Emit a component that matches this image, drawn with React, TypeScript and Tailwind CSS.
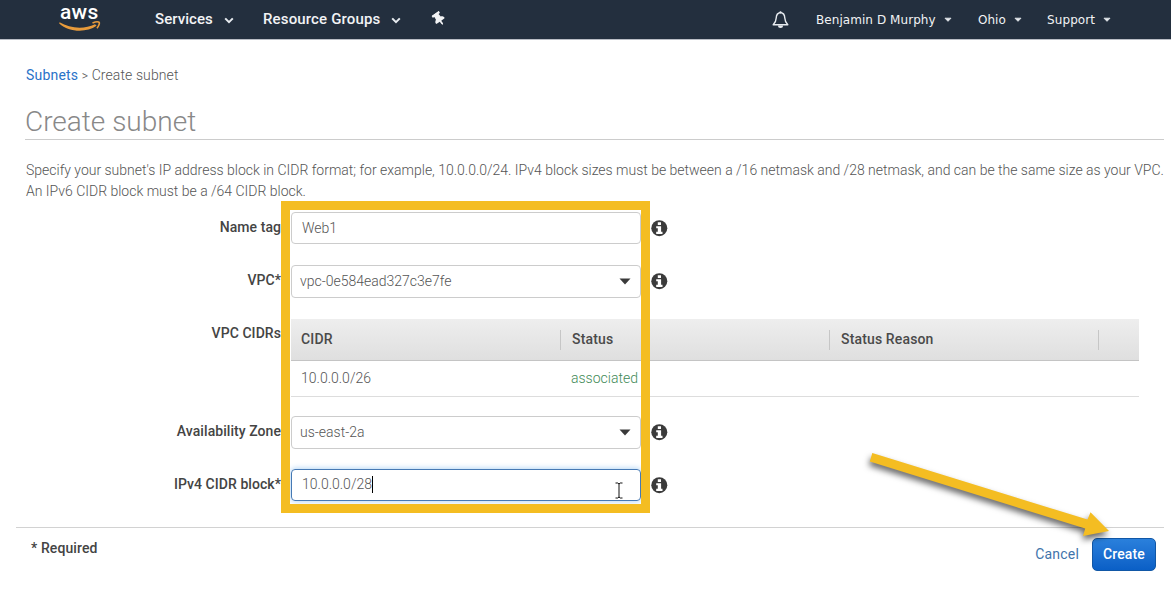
import type { ReactNode } from "react";
import { FaThumbtack } from "react-icons/fa";

function Chevron({ className, small }: { className?: string; small?: boolean }) {
  return (
    <svg className={className} width={small ? 8 : 10} height={small ? 6 : 7} viewBox="0 0 10 7" fill="none">
      {small ? (
        <path d="M1.2 1.2h7.6L5 5.2z" fill="#e8ecf0" stroke="#e8ecf0" strokeWidth="1" />
      ) : (
        <path d="M1.2 1.4 5 5.2l3.8-3.8" stroke="#e8ecf0" strokeWidth="2" />
      )}
    </svg>
  );
}

function Logo() {
  return (
    <div className="relative h-[39px] w-[42px] shrink-0">
      <span className="absolute top-0 left-[1px] text-[21px] leading-[25px] font-medium tracking-[0.3px] text-white">
        aws
      </span>
      <svg className="absolute top-[20px] left-0" width="42" height="12" viewBox="0 0 42 12" fill="none">
        <path
          d="M0.500 2.200C11 8.400 25 9.600 36 4.200l1.600 1.600C27 13 10 12.200 0.200 3.400z"
          fill="#e89b3b"
        />
        <path d="M33.500 3c3-1.300 6-1.400 6.700-.6.500.800-.3 3.800-2.300 5.800" stroke="#e89b3b" strokeWidth="1.600" />
      </svg>
    </div>
  );
}

function Bell() {
  return (
    <svg width="17" height="18" viewBox="0 0 17 18" fill="none">
      <path
        d="M8.500 1.500C5.600 1.900 4.300 4 4.200 7c-.1 3.200-1 4.800-3 6.700h14.600c-2-1.900-2.900-3.500-3-6.700-.1-3-1.400-5.100-4.300-5.500z"
        stroke="#e8ecf0"
        strokeWidth="1.400"
        strokeLinejoin="round"
      />
      <path d="M6 14.500a2.500 2.500 0 0 0 5 0z" fill="#e8ecf0" />
      <circle cx="8.500" cy="1.300" r="1.100" fill="#e8ecf0" />
    </svg>
  );
}

function Row({ label, children, className }: { label: string; children: ReactNode; className: string }) {
  return (
    <div className={`flex ${className}`}>
      <div className="w-[281px] shrink-0 text-right text-[14px] leading-[20px] font-medium tracking-[0.06px] whitespace-nowrap text-[#444]">
        {label}
      </div>
      <div className="ml-[10px] flex">{children}</div>
    </div>
  );
}

function Info() {
  return (
    <svg className="mt-[8px] ml-[10px] shrink-0" width="17" height="17" viewBox="0 0 17 17">
      <circle cx="8.300" cy="8.200" r="8" fill="#3b3b3b" />
      <path d="M6.800 2.300h3.200v2.800H6.800zM5.200 6.200h4.900v5.600h1.400v2.100H5.200v-2.100h1.600V8.200H5.200z" fill="#fff" />
    </svg>
  );
}

function Select({ value }: { value: string }) {
  return (
    <div className="flex h-[33px] w-[350px] items-center justify-between rounded-[4px] border border-[#ccc] bg-white pr-[9px] pl-[8px] text-[14px] font-light text-[#555]">
      {value}
      <svg width="12" height="7" viewBox="0 0 12 7">
        <path d="M0.500 0.500h11L6 6.500z" fill="#3a3a3a" />
      </svg>
    </div>
  );
}

function HeadCell({ children, className }: { children?: ReactNode; className: string }) {
  return (
    <div
      className={`flex h-[20px] items-center border-[#c6c6c6] text-[14px] font-medium tracking-[0.150px] text-[#4a4a4a] ${className}`}
    >
      {children}
    </div>
  );
}

export default function App() {
  return (
    <div className="relative h-[599px] w-[1171px] overflow-hidden bg-white font-[Roboto,sans-serif]">
      <header className="flex h-[40px] items-center border-b border-[#b9bdc5] bg-[#232f3e] pl-[59px] text-[#f2f3f5]">
        <Logo />
        <nav className="flex h-full items-center pb-[1px] text-[15px] font-medium">
          <span className="ml-[54px] w-[58px] tracking-[0.05px] whitespace-nowrap">Services</span>
          <Chevron className="mt-[2px] ml-[11px]" />
          <span className="ml-[29px] w-[118px] tracking-[0.150px] whitespace-nowrap">Resource Groups</span>
          <Chevron className="mt-[2px] ml-[10px]" />
          <FaThumbtack className="ml-[31px] -rotate-[35deg]" size={14} />
        </nav>
        <div className="ml-auto flex items-center pr-[60px] font-['DejaVu_Sans',sans-serif] text-[12px]">
          <Bell />
          <span className="ml-[27px] w-[120px] tracking-[0.060px] whitespace-nowrap">Benjamin D Murphy</span>
          <Chevron small className="ml-[8px]" />
          <span className="ml-[26px] w-[28px] whitespace-nowrap">Ohio</span>
          <Chevron small className="ml-[8px]" />
          <span className="ml-[25px] w-[49px] tracking-[0.1px] whitespace-nowrap">Support</span>
          <Chevron small className="ml-[7px]" />
        </div>
      </header>

      <div className="pt-[25px] pl-[26px] text-[14px] leading-[20px] font-light tracking-[0.1px] text-[#555]">
        <a className="font-normal tracking-[0.2px] text-[#2a72c8]">Subnets</a> <span className="text-[12px]">&gt;</span>{" "}
        Create subnet
      </div>
      <h1 className="ml-[25px] w-[1139px] border-b border-[#ccc] pt-[18px] text-[28px] leading-[35px] font-light text-[#888]">
        Create subnet
      </h1>
      <p className="pt-[20px] pl-[26px] text-[14px] leading-[21px] font-light tracking-[-0.006px] whitespace-nowrap text-[#555]">
        Specify your subnet's IP address block in CIDR format; for example, 10.0.0.0/24. IPv4 block sizes must be between
        a /16 netmask and /28 netmask, and can be the same size as your VPC.
        <br />
        An IPv6 CIDR block must be a /64 CIDR block.
      </p>

      <form className="pt-[10px]">
        <Row label="Name tag" className="h-[53px] [&>div:first-child]:pt-[5px]">
          <div className="flex h-[32px] w-[350px] items-center rounded-[4px] border border-[#ccc] pl-[10px] text-[14px] font-light text-[#555]">
            Web1
          </div>
          <Info />
        </Row>
        <Row label="VPC*" className="h-[54px] [&>div:first-child]:pt-[5px]">
          <Select value="vpc-0e584ead327c3e7fe" />
          <Info />
        </Row>
        <Row label="VPC CIDRs" className="h-[97px] [&>div:first-child]:pt-[4px]">
          <div className="h-[78px] w-[848px] border-b border-[#ddd]">
            <div className="flex h-[42px] items-center border-b border-[#c4c4c4] bg-linear-to-b from-[#eeeeee] to-[#dfdfdf]">
              <HeadCell className="w-[270px] border-r pl-[10px]">CIDR</HeadCell>
              <HeadCell className="w-[269px] border-r pl-[11px]">Status</HeadCell>
              <HeadCell className="w-[269px] border-r pl-[11px]">Status Reason</HeadCell>
            </div>
            <div className="flex h-[35px] items-center text-[14px] font-light text-[#555]">
              <div className="w-[280px] pl-[10px]">10.0.0.0/26</div>
              <div className="text-[#3f8a57]">associated</div>
            </div>
          </div>
        </Row>
        <Row label="Availability Zone" className="h-[53px] [&>div:first-child]:pt-[5px]">
          <Select value="us-east-2a" />
          <Info />
        </Row>
        <Row label="IPv4 CIDR block*" className="h-[58px] [&>div:first-child]:pt-[5px]">
          <div className="flex h-[32px] w-[350px] items-center rounded-[4px] border border-[#4679b4] pb-[1px] pl-[10px] text-[14px] font-light text-[#555] shadow-[0_0_6px_#9fcaf2]">
            10.0.0.0/28
            <span className="h-[17px] w-px bg-black" />
            <svg className="mt-[11px] mr-[17px] ml-auto" width="8" height="17" viewBox="0 0 8 17" fill="none">
              <path d="M.5 1h2.300L4 2l1.200-1h2.300M4 2v13M.5 16h2.300L4 15l1.200 1h2.300" stroke="#111" />
            </svg>
          </div>
          <Info />
        </Row>
      </form>

      <footer className="ml-[16px] flex w-[1148px] justify-between border-t border-[#d2d2d2] text-[14px]">
        <span className="pt-[10px] pl-[15px] leading-[20px] font-medium tracking-[0.1px] text-[#444]">* Required</span>
        <div className="flex items-center pt-[10px] pr-[8px]">
          <a className="mr-[13px] tracking-[0.200px] text-[#3f74ab]">Cancel</a>
          <button className="h-[33px] w-[64px] rounded-[5px] border border-[#1157a6] bg-linear-to-b from-[#2a80dc] to-[#0a5fc6] font-medium tracking-[0.1px] text-white">
            Create
          </button>
        </div>
      </footer>

      <div className="absolute top-[201px] left-[281px] h-[312px] w-[369px] border-[9px] border-[#f4bd22]" />
      <svg
        className="absolute top-[440px] left-[860px] drop-shadow-[-1px_4px_3px_rgba(0,0,0,0.6)]"
        width="260"
        height="115"
        viewBox="0 0 260 115"
      >
        <path d="M12.300 13 227.500 79.600 230.500 72.300 249 91 223 96 225.200 88.600 9.800 21.500z" fill="#f4bd22" />
      </svg>
    </div>
  );
}
